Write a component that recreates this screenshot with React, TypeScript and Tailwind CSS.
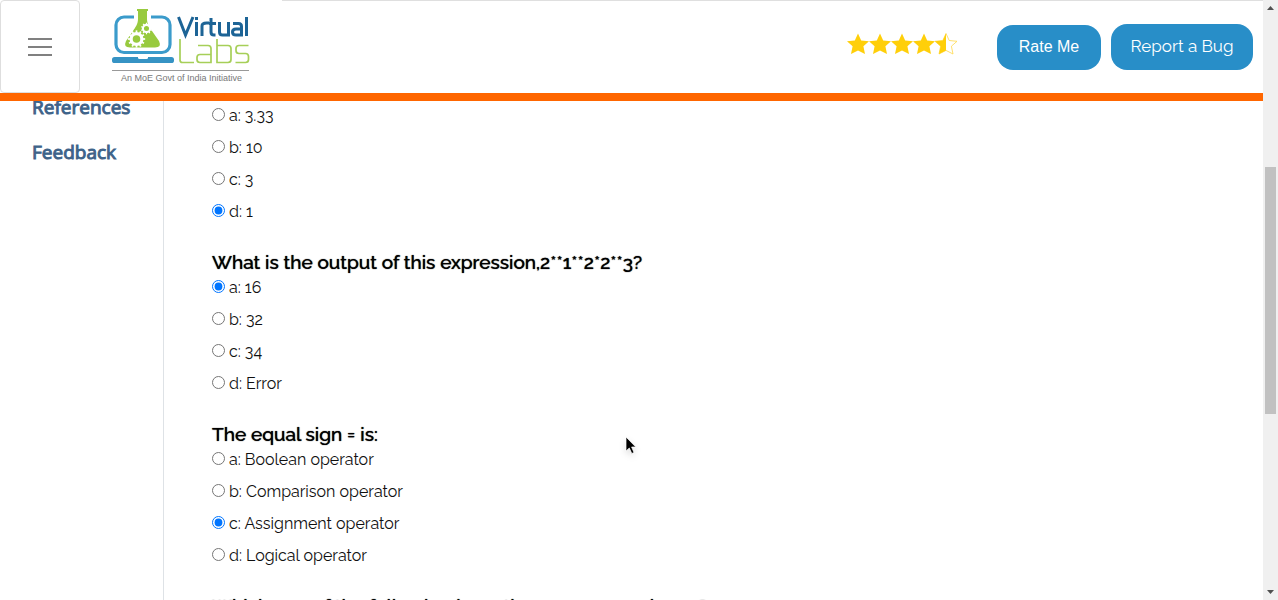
import React from "react";

type Question = { prompt: string; options: string[]; answer: number };

const questions: Question[] = [
  { prompt: "", options: ["a: 3.33", "b: 10", "c: 3", "d: 1"], answer: 3 },
  {
    prompt: "What is the output of this expression,2**1**2*2**3?",
    options: ["a: 16", "b: 32", "c: 34", "d: Error"],
    answer: 0,
  },
  {
    prompt: "The equal sign = is:",
    options: ["a: Boolean operator", "b: Comparison operator", "c: Assignment operator", "d: Logical operator"],
    answer: 2,
  },
  {
    prompt: "Which one of the following have the same precedence?",
    options: [],
    answer: -1,
  },
];

const STAR = "M11 0.5 L14.2 7.5 L22 8.3 L16.4 13.2 L18 21 L11 17.4 L4 21 L5.6 13.2 L0 8.3 L7.8 7.5 Z";

function Gear({ x, y, r, teeth }: { x: number; y: number; r: number; teeth: number }) {
  return (
    <g transform={`translate(${x} ${y})`}>
      <circle r={r} fill="none" stroke="#fff" strokeWidth={r * 0.6} />
      {Array.from({ length: teeth }, (_, i) => (
        <rect
          key={i}
          x={-r * 0.16}
          y={-r * 1.6}
          width={r * 0.32}
          height={r * 0.5}
          fill="#fff"
          transform={`rotate(${(i * 360) / teeth})`}
        />
      ))}
    </g>
  );
}

function Logo() {
  return (
    <svg viewBox="0 0 140 78" className="h-[78px] w-[140px]" role="img" aria-label="Virtual Labs">
      <rect x="4" y="9" width="54" height="35.5" rx="8" fill="none" stroke="#3b9bcb" strokeWidth="3.2" />
      <path d="M22 5h17v8H22z" fill="#fff" />
      <rect x="0" y="49" width="62" height="6" rx="2.6" fill="#3693c4" />
      <path d="M26 48h10v1.500q0 1.500-1.500 1.500h-7q-1.500 0-1.500-1.500z" fill="#fff" />
      <path
        d="M25 1h11v2h-1v8c0 5 2.500 8 5 12l7 10q3 6.500-4 6.500H18q-7 0-4-6.500l7-10c2.500-4 5-7 5-12V3h-1z"
        fill="#98ca3e"
      />
      <Gear x={24.5} y={31} r={5.4} teeth={12} />
      <Gear x={34.5} y={20.5} r={3.6} teeth={10} />
      <g fill="none" stroke="#1d6496" strokeWidth="3">
        <path d="M66.500 9 L73.500 27 L81 9" />
        <path d="M84.500 14V28M84.500 9v3" />
        <path d="M90 28V18q0-3 4.500-3H97" />
        <path d="M99 10V24q0 3 3 3h1.500M97 15.500h7" />
        <path d="M107.500 14V24q0 3 3 3h6V14" />
        <path d="M121 15.500h5.500q3 0 3 3V27H124q-3.500 0-3.500-3t3.500-3h5" />
        <path d="M134.500 9V28" />
      </g>
      <g fill="none" stroke="#a6cf58" strokeWidth="1.7">
        <path d="M68 31V52q0 2.500 2.500 2.500H82" />
        <path d="M86 37.500h10q3 0 3 3v14H88q-3 0-3-3v-2q0-3 3-3h11" />
        <path d="M105 31V54.500h11q3 0 3-3v-11q0-3-3-3h-11" />
        <path d="M136.500 37.500H127q-3 0-3 3v2q0 3 3 3h6.500q3 0 3 3v3q0 3-3 3H123.500" />
      </g>
      <path d="M0 62.500H137" stroke="#999" />
      <text x="9" y="73" fontSize="9" fill="#777" fontFamily="Liberation Sans, sans-serif">
        An MoE Govt of India Initiative
      </text>
    </svg>
  );
}

function Rating() {
  return (
    <div className="flex" role="img" aria-label="4.5 out of 5 stars">
      {[0, 1, 2, 3, 4].map((i) => (
        <svg key={i} viewBox="0 0 22 22" className="size-[22px]">
          {i < 4 ? (
            <path d={STAR} fill="#ffcf0a" />
          ) : (
            <>
              <path d={STAR} fill="#fff" stroke="#ffd84a" strokeWidth="0.8" />
              <path d="M11 .5V17.400L4 21 5.600 13.200 0 8.300 7.800 7.500Z" fill="#ffcf0a" />
            </>
          )}
        </svg>
      ))}
    </div>
  );
}

function QuestionBlock({ question, index }: { question: Question; index: number }) {
  return (
    <fieldset className="mb-7">
      {question.prompt && (
        <legend className="pb-1 text-[19px] leading-5 font-medium whitespace-nowrap text-black [text-shadow:0_0_1px_black]">
          {question.prompt}
        </legend>
      )}
      <div className="flex flex-col gap-2">
        {question.options.map((option, i) => (
          <label key={option} className="flex h-6 items-center gap-1 text-base text-[#101010]">
            <input
              type="radio"
              name={`question-${index}`}
              defaultChecked={i === question.answer}
              className="mb-1 size-[13px] accent-[#0075ff]"
            />
            {option}
          </label>
        ))}
      </div>
    </fieldset>
  );
}

export default function App() {
  return (
    <div className="flex h-screen overflow-hidden bg-white font-['Raleway','Lato',sans-serif]">
      <div className="flex min-w-0 flex-1 flex-col">
        <header className="flex h-[101px] shrink-0 items-stretch border-b-8 border-b-[#ff6600]">
          <button
            type="button"
            aria-label="Menu"
            className="flex w-20 flex-col items-center justify-center gap-[6px] rounded border border-[#dedede]"
          >
            <span className="h-[2px] w-6 bg-[#808080]" />
            <span className="h-[2px] w-6 bg-[#808080]" />
            <span className="h-[2px] w-6 bg-[#808080]" />
          </button>
          <a href="#home" className="w-[202px] pt-2 pl-8">
            <Logo />
          </a>
          <div className="flex flex-1 items-center justify-end border-t border-[#dfdfdf] pr-[10px]">
            <div className="mr-10 mb-[6px]">
              <Rating />
            </div>
            <button
              type="button"
              className="mr-[10px] h-[45px] w-[104px] rounded-2xl bg-[#288ec8] font-['Liberation_Sans',sans-serif] text-base text-white"
            >
              Rate Me
            </button>
            <button type="button" className="h-[46px] w-[142px] rounded-2xl bg-[#288ec8] text-[17px] text-white">
              Report a Bug
            </button>
          </div>
        </header>
        <div className="flex min-h-0 flex-1 overflow-hidden">
          <nav className="w-[164px] shrink-0 border-r border-[#dee2e6] pl-8 font-['Open_Sans',sans-serif] text-[19px] font-normal text-[#3e6389] [-webkit-text-stroke:1px_#3e6389]">
            <div className="-mt-[9px] flex flex-col gap-[15px]">
              <a href="#references" className="leading-[30px]">
                References
              </a>
              <a href="#feedback" className="leading-[30px]">
                Feedback
              </a>
            </div>
          </nav>
          <main className="flex-1 pt-[3px] pl-12">
            {questions.map((q, i) => (
              <QuestionBlock key={i} question={q} index={i} />
            ))}
          </main>
        </div>
      </div>
      <div className="flex w-[15px] shrink-0 flex-col items-center bg-[#f0f0f0]" aria-hidden="true">
        <svg viewBox="0 0 15 15" className="size-[15px]">
          <path d="M4 10h7L7.500 6z" fill="#505050" />
        </svg>
        <div className="flex min-h-0 w-full flex-1 flex-col items-center">
          <div className="h-[26.7%]" />
          <div className="h-[43.3%] w-[11px] bg-[#c1c1c1]" />
        </div>
        <svg viewBox="0 0 15 15" className="size-[15px]">
          <path d="M4 5h7L7.500 9z" fill="#505050" />
        </svg>
      </div>
      <svg
        viewBox="0 0 12 20"
        className="pointer-events-none absolute top-[436px] left-[625px] h-5 w-3 drop-shadow-md"
        aria-hidden="true"
      >
        <path d="M1 1V15L4.300 12 6.800 17.500 9 16.500 6.600 11H10.800Z" fill="#000" stroke="#fff" strokeWidth=".7" />
      </svg>
    </div>
  );
}
